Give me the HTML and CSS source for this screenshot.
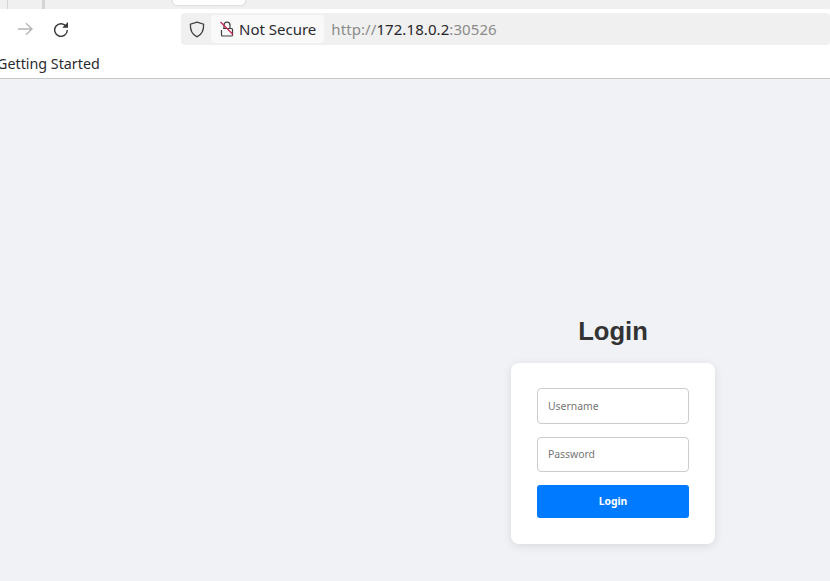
FILE: index.html
```
<!DOCTYPE html>
<html lang="en">
<head>
<meta charset="utf-8">
<title>Login</title>
<link rel="stylesheet" href="styles.css">
</head>
<body>
<header class="chrome">
  <div class="tabstrip">
    <span class="strip-sep strip-sep-a"></span>
    <span class="strip-sep strip-sep-b"></span>
    <span class="active-tab"></span>
  </div>
  <div class="toolbar">
    <svg class="icon icon-forward" width="16" height="16" viewBox="0 0 16 16" fill="none" stroke="#b4b4b6" stroke-width="1.4"><path d="M1 8h14M9 2.200 15 8l-6 5.800"/></svg>
    <svg class="icon icon-reload" width="16" height="16" viewBox="0 0 16 16" fill="none"><path d="M13.400 5.800A6.300 6.300 0 1 0 14.300 9" stroke="#3a3a3e" stroke-width="1.400"/><path d="M15 1V6.800H9.200z" fill="#3a3a3e"/></svg>
    <div class="urlbar">
      <svg class="icon icon-shield" width="16" height="17" viewBox="0 0 16 17" fill="none" stroke="#404044" stroke-width="1.300"><path d="M8 1.200 14.600 3.200C14.900 9.500 12.800 13.600 8 15.800 3.200 13.600 1.100 9.500 1.400 3.200Z"/></svg>
      <div class="security">
        <svg class="icon icon-lock" width="14" height="16" viewBox="0 0 14 16" fill="none"><path d="M4 7.500V4.200a3 3 0 0 1 6 0V7.500" stroke="#404044" stroke-width="1.200"/><path d="M3 7.500H11.500A1 1 0 0 1 12.500 8.500V14A1 1 0 0 1 11.500 15H2.500A1 1 0 0 1 1.500 14V9" stroke="#404044" stroke-width="1.200"/><path d="M0.500 1 13 13.500" stroke="#c8264e" stroke-width="1.300"/></svg>
        <span class="security-label">Not Secure</span>
      </div>
      <div class="address"><span class="dim">http://</span>172.18.0.2<span class="dim">:30526</span></div>
    </div>
  </div>
  <div class="bookmarks"><span class="bookmark">Getting Started</span></div>
</header>
<main class="page">
  <section class="login">
    <h1 class="login-title">Login</h1>
    <form class="card">
      <input class="field" type="text" placeholder="Username">
      <input class="field field-password" type="password" placeholder="Password">
      <button class="submit" type="button">Login</button>
    </form>
  </section>
</main>
</body>
</html>
```

FILE: styles.css
```
* { box-sizing: border-box; }
html, body { margin: 0; height: 100%; overflow: hidden; }
body {
  width: 830px;
  height: 581px;
  display: flex;
  flex-direction: column;
  background: #f0f2f5;
  font-family: "Noto Sans", sans-serif;
}
.chrome { background: #fff; border-bottom: 1px solid #c8c8c8; height: 79px; flex: none; }
.tabstrip { position: relative; height: 9px; background: #f0f0f0; }
.strip-sep { position: absolute; top: 0; width: 1px; height: 9px; background: #d4d4d4; }
.strip-sep-a { left: 7px; }
.strip-sep-b { left: 42px; width: 3px; }
.active-tab { position: absolute; left: 173px; top: 0; width: 72px; height: 5px; background: #fff; border-radius: 0 0 4px 4px; box-shadow: 0 0 2px rgba(0,0,0,.25); }
.toolbar { display: flex; align-items: center; height: 40px; padding-left: 17px; }
.icon { flex: none; display: block; }
.icon-reload { margin-left: 20px; }
.urlbar { display: flex; align-items: center; margin-left: 112px; width: 649px; height: 32px; background: #f0f0f0; border-radius: 4px; padding-left: 8px; }
.security { display: flex; align-items: center; height: 28px; margin-left: 6px; padding: 0 8px 0 9px; background: #f9f9f9; border-radius: 4px; color: #2b2b30; font-size: 15px; }
.icon-lock { margin-right: 5px; }
.security-label { white-space: nowrap; }
.address { margin-left: 7px; font-size: 15px; letter-spacing: .08px; color: #26262a; white-space: nowrap; }
.dim { color: #8b8b8b; }
.bookmarks { height: 29px; display: flex; align-items: center; padding-bottom: 1px; }
.bookmark { margin-left: -3px; font-size: 14.300px; color: #2c2c30; white-space: nowrap; }
.page { flex: 1; display: flex; justify-content: flex-end; align-items: flex-start; padding: 236px 115px 0 0; }
.login { width: 204px; display: flex; flex-direction: column; align-items: center; }
.login-title { margin: 0 0 16px; font: bold 25.600px/32px "Liberation Sans", sans-serif; color: #333; }
.card { width: 204px; height: 181px; background: #fff; border-radius: 8px; box-shadow: 0 2px 10px rgba(0,0,0,.1); padding: 25px 26px 0; display: flex; flex-direction: column; }
.field { width: 152px; height: 36px; margin-bottom: 13px; padding: 0 10px 1px; border: 1px solid #ccc; border-radius: 4px; background: #fff; font: 10.400px "Noto Sans", sans-serif; color: #333; outline: none; }
.field-password { height: 35px; padding-bottom: 2px; }
.field::placeholder { color: #757575; opacity: 1; }
.submit { width: 152px; height: 33px; border: 0; border-radius: 3px; padding: 0 0 2px; background: #007bff; color: #fff; font: bold 10.400px "Noto Sans", sans-serif; }
```
